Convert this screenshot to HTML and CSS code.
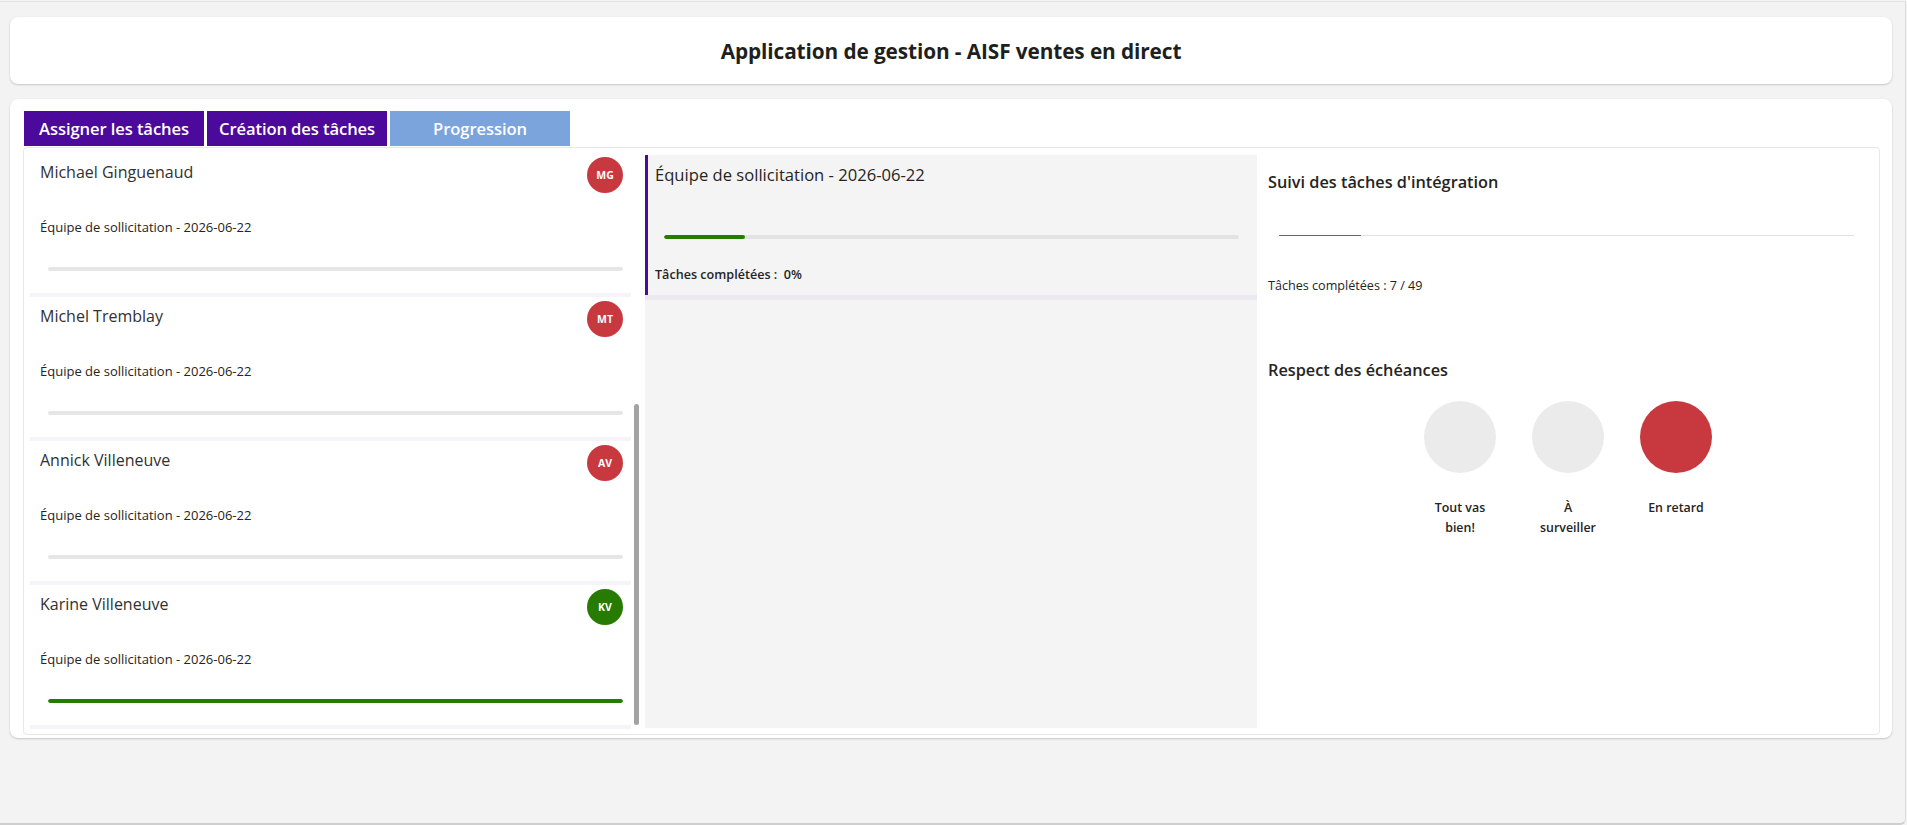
FILE: index.html
```html
<!DOCTYPE html>
<html lang="fr">
<head>
<meta charset="utf-8">
<title>Application de gestion - AISF ventes en direct</title>
<link rel="stylesheet" href="styles.css">
</head>
<body>
<div class="frame">
  <header class="header-card">
    <h1 class="app-title">Application de gestion - AISF ventes en direct</h1>
  </header>

  <section class="main-card">
    <nav class="tabs">
      <div class="tab tab-dark">Assigner les tâches</div>
      <div class="tab tab-dark">Création des tâches</div>
      <div class="tab tab-light">Progression</div>
    </nav>

    <div class="content-box">
      <div class="people-col">
        <div class="person-card">
          <div class="person-head">
            <span class="person-name">Michael Ginguenaud</span>
            <span class="avatar avatar-red">MG</span>
          </div>
          <div class="person-sub">Équipe de sollicitation - 2026-06-22</div>
          <div class="person-bar"><div class="person-fill" style="width:0%"></div></div>
        </div>
        <div class="person-card">
          <div class="person-head">
            <span class="person-name">Michel Tremblay</span>
            <span class="avatar avatar-red">MT</span>
          </div>
          <div class="person-sub">Équipe de sollicitation - 2026-06-22</div>
          <div class="person-bar"><div class="person-fill" style="width:0%"></div></div>
        </div>
        <div class="person-card">
          <div class="person-head">
            <span class="person-name">Annick Villeneuve</span>
            <span class="avatar avatar-red">AV</span>
          </div>
          <div class="person-sub">Équipe de sollicitation - 2026-06-22</div>
          <div class="person-bar"><div class="person-fill" style="width:0%"></div></div>
        </div>
        <div class="person-card">
          <div class="person-head">
            <span class="person-name">Karine Villeneuve</span>
            <span class="avatar avatar-green">KV</span>
          </div>
          <div class="person-sub">Équipe de sollicitation - 2026-06-22</div>
          <div class="person-bar"><div class="person-fill" style="width:100%"></div></div>
        </div>
        <div class="scroll-thumb"></div>
      </div>

      <div class="team-col">
        <div class="team-item">
          <div class="team-title">Équipe de sollicitation - 2026-06-22</div>
          <div class="team-bar"><div class="team-fill" style="width:14%"></div></div>
          <div class="team-done">Tâches complétées :&nbsp; 0%</div>
        </div>
      </div>

      <div class="stats-col">
        <h2 class="stats-title">Suivi des tâches d'intégration</h2>
        <div class="stats-line"><div class="stats-line-fill" style="width:14.3%"></div></div>
        <div class="stats-count">Tâches complétées : 7 / 49</div>

        <h2 class="stats-title deadline-title">Respect des échéances</h2>
        <div class="lights">
          <div class="light">
            <div class="dot dot-off"></div>
            <div class="light-label">Tout vas bien!</div>
          </div>
          <div class="light">
            <div class="dot dot-off"></div>
            <div class="light-label">À surveiller</div>
          </div>
          <div class="light">
            <div class="dot dot-red"></div>
            <div class="light-label">En retard</div>
          </div>
        </div>
      </div>
    </div>
  </section>
</div>
</body>
</html>
```

FILE: styles.css
```css
* {
  box-sizing: border-box;
}

html, body {
  margin: 0;
  padding: 0;
  background: #f3f3f3;
  font-family: "Open Sans", "Noto Sans", "Liberation Sans", sans-serif;
  color: #252423;
}

.frame {
  width: 1906px;
  height: 824px;
  margin-top: 1px;
  border-top: 1px solid #e3e3e3;
  border-right: 1px solid #dcdcdc;
  border-bottom: 2px solid #cfcfcf;
  border-bottom-right-radius: 6px;
  padding: 15px 0 0 10px;
}

.header-card {
  width: 1882px;
  height: 67px;
  background: #fff;
  border-radius: 8px;
  box-shadow: 0 1px 2px rgba(0, 0, 0, 0.18), 0 0 1px rgba(0, 0, 0, 0.08);
  display: flex;
  align-items: center;
  justify-content: center;
}

.app-title {
  margin: 0;
  font-size: 20.8px;
  font-weight: 700;
  color: #201f1e;
  letter-spacing: -0.1px;
}

.main-card {
  width: 1882px;
  height: 639px;
  margin-top: 15px;
  background: #fff;
  border-radius: 8px;
  box-shadow: 0 1px 2px rgba(0, 0, 0, 0.18), 0 0 1px rgba(0, 0, 0, 0.08);
  padding: 12px 12px 3px 13px;
  display: flex;
  flex-direction: column;
}

.tabs {
  display: flex;
  gap: 3px;
  padding-left: 1px;
  height: 35px;
}

.tab {
  width: 180px;
  height: 35px;
  display: flex;
  align-items: center;
  justify-content: center;
  color: #fff;
  font-size: 16.6px;
  font-weight: 600;
  letter-spacing: -0.1px;
}

.tab-dark {
  background: #4b0a9c;
}

.tab-light {
  background: #7ba4dc;
}

.content-box {
  margin-top: 1px;
  flex: 1;
  border: 1px solid #e8e8e8;
  border-radius: 4px;
  display: grid;
  grid-template-columns: 616px 612px 1fr;
  column-gap: 5px;
  overflow: hidden;
}

/* left list */
.people-col {
  position: relative;
  padding-top: 5px;
  overflow: hidden;
}

.person-card {
  margin-left: 6px;
  width: 601px;
  height: 144px;
  padding: 4px 8px 0 10px;
  border-bottom: 4px solid #f4f4f9;
}

.person-head {
  display: flex;
  justify-content: space-between;
  align-items: flex-start;
  height: 36px;
}

.person-name {
  margin-top: 4px;
  font-size: 16px;
  line-height: 22px;
  color: #323130;
  font-weight: 400;
}

.avatar {
  width: 36px;
  height: 36px;
  border-radius: 50%;
  display: flex;
  align-items: center;
  justify-content: center;
  color: #fff;
  font-size: 10.5px;
  font-weight: 700;
}

.avatar-red {
  background: #c8383f;
}

.avatar-green {
  background: #267b00;
}

.person-sub {
  margin-top: 25px;
  font-size: 13px;
  line-height: 18px;
  color: #252423;
}

.person-bar {
  margin-top: 31px;
  margin-left: 8px;
  height: 4px;
  border-radius: 2px;
  background: #e6e6e6;
  overflow: hidden;
}

.person-fill {
  height: 100%;
  background: #267b00;
  border-radius: 2px;
}

.scroll-thumb {
  position: absolute;
  right: 1px;
  top: 256px;
  width: 5px;
  height: 321px;
  border-radius: 3px;
  background: #a3a3a3;
}

/* middle */
.team-col {
  margin: 7px 0 6px;
  background: #f4f4f4;
}

.team-item {
  height: 145px;
  border-bottom: 5px solid #ebe9ef;
  position: relative;
  padding: 9px 18px 0 7px;
}

.team-item::before {
  content: "";
  position: absolute;
  left: 0;
  top: 0;
  width: 3px;
  height: 140px;
  background: #4b0a9c;
}

.team-title {
  margin-left: 3px;
  font-size: 16.6px;
  line-height: 22px;
  font-weight: 500;
  color: #252423;
}

.team-bar {
  margin-top: 49px;
  margin-left: 12px;
  height: 4px;
  border-radius: 2px;
  background: #e3e3e3;
  overflow: hidden;
}

.team-fill {
  height: 100%;
  background: #267b00;
  border-radius: 2px;
}

.team-done {
  margin-top: 27px;
  margin-left: 3px;
  font-size: 12.6px;
  line-height: 18px;
  font-weight: 600;
  color: #252423;
}

/* right */
.stats-col {
  padding: 0 25px 0 6px;
}

.stats-title {
  margin: 23px 0 0;
  font-size: 16.3px;
  line-height: 22px;
  font-weight: 600;
  color: #252423;
}

.stats-line {
  margin-top: 42px;
  margin-left: 11px;
  height: 1px;
  background: #e1e1e1;
}

.stats-line-fill {
  height: 1px;
  background: #3a6db5;
}

.stats-count {
  margin-top: 41px;
  font-size: 12.6px;
  line-height: 18px;
  color: #252423;
}

.deadline-title {
  margin-top: 64px;
}

.lights {
  margin-top: 20px;
  display: flex;
  justify-content: center;
  gap: 36px;
  padding-left: 14px;
}

.light {
  width: 72px;
  display: flex;
  flex-direction: column;
  align-items: center;
}

.dot {
  width: 72px;
  height: 72px;
  border-radius: 50%;
}

.dot-off {
  background: #ebebeb;
}

.dot-red {
  background: #c8393f;
}

.light-label {
  margin-top: 25px;
  width: 62px;
  text-align: center;
  font-size: 12.4px;
  line-height: 20px;
  font-weight: 600;
  color: #252423;
}
```
